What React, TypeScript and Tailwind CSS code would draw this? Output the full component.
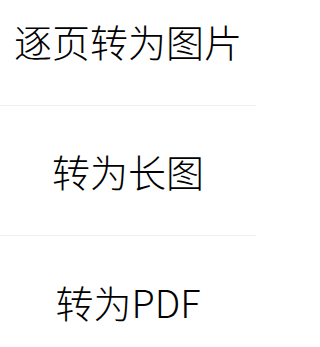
const items = ["逐页转为图片", "转为长图", "转为PDF"];

export default function App() {
  return (
    <div className="w-[256px] h-[347px] overflow-hidden bg-white" style={{ fontFamily: '"Noto Sans CJK SC", "Noto Sans", sans-serif' }}>
      <div className="-mt-[24px] flex flex-col">
        {items.map((label, idx) => (
          <div
            key={idx}
            className={
              idx < items.length - 1
                ? "h-[130px] flex items-center justify-center border-b border-[#f0f0f0] text-[38px] font-light text-black"
                : "h-[130px] flex items-center justify-center text-[38px] font-light text-black"
            }
          >
            {label}
          </div>
        ))}
      </div>
    </div>
  );
}
